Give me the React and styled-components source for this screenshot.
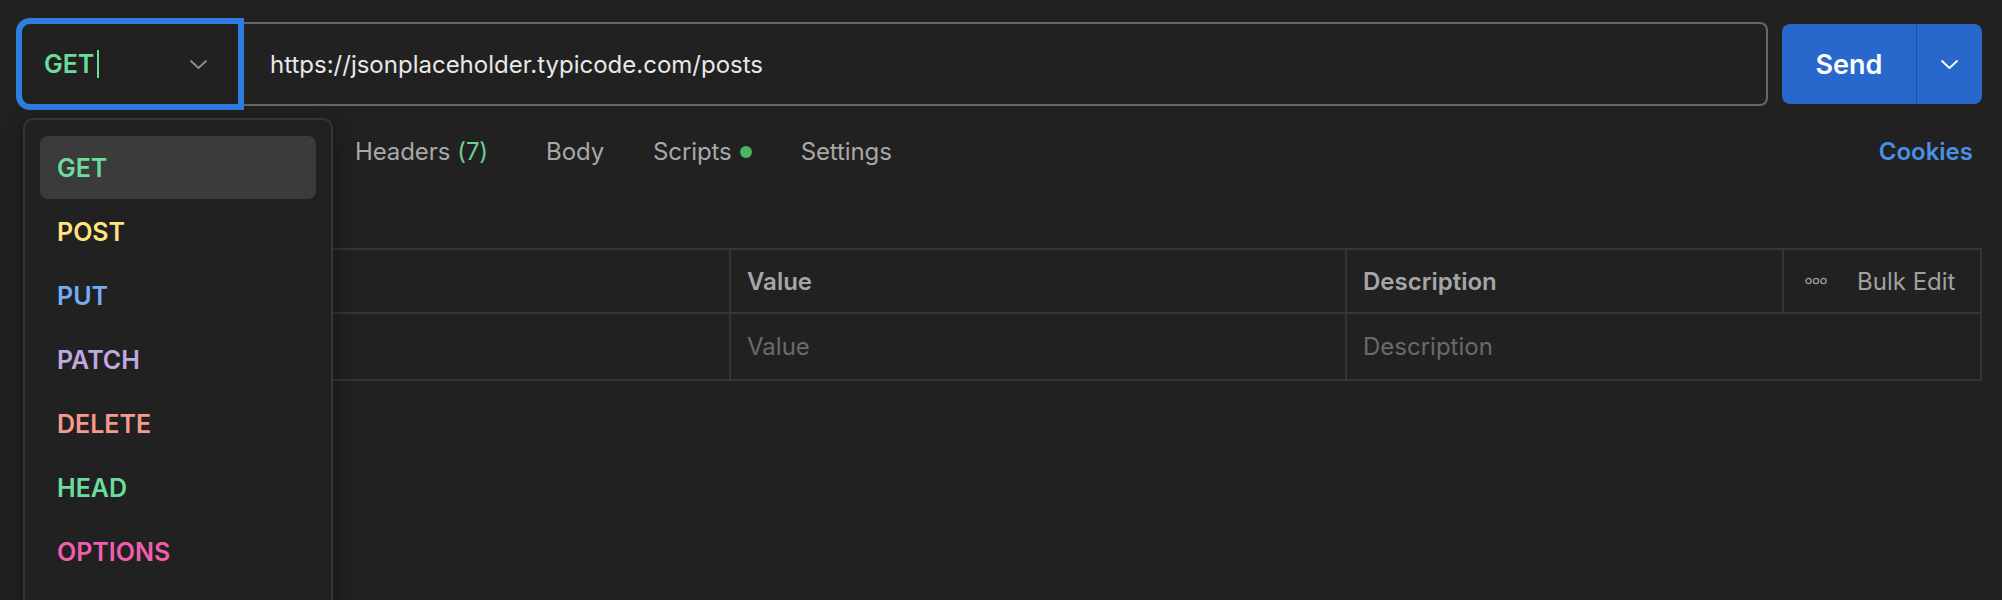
import React from "react";
import styled, { createGlobalStyle } from "styled-components";

const GlobalStyle = createGlobalStyle`
  html, body { margin: 0; padding: 0; background: #212121; }
  body { font-family: Inter, "Noto Sans", sans-serif; -webkit-font-smoothing: antialiased; }
  * { box-sizing: border-box; }
`;

const Page = styled.div`
  position: relative;
  height: 600px;
  overflow: hidden;
  padding: 18px 20px 0 23px;
  background: #212121;
`;

const TopRow = styled.div`
  display: flex;
  align-items: center;
  height: 92px;
  margin-left: -7px;
`;

const MethodSelect = styled.div`
  flex-shrink: 0;
  width: 228px;
  height: 92px;
  border: 6px solid #2f7de1;
  border-radius: 14px 0 0 14px;
  display: flex;
  align-items: center;
  justify-content: space-between;
  padding: 0 31px 0 22px;
  background: #212121;
`;

const MethodValue = styled.span`
  display: flex;
  align-items: center;
  color: #6bdd9a;
  font-size: 25px;
  font-weight: 600;
`;

const Caret = styled.span`
  width: 2px;
  height: 28px;
  margin-left: 3px;
  background: #6bdd9a;
`;

const UrlField = styled.div`
  flex: 1;
  height: 84px;
  border: 2px solid #676767;
  border-left: none;
  border-radius: 0 8px 8px 0;
  padding-left: 26px;
  display: flex;
  align-items: center;
  color: #e8e8e8;
  font-size: 24px;
`;

const SendGroup = styled.div`
  flex-shrink: 0;
  margin-left: 14px;
  width: 200px;
  height: 80px;
  border-radius: 8px;
  background: #2868cd;
  display: flex;
  overflow: hidden;
`;

const SendButton = styled.div`
  width: 135px;
  display: flex;
  align-items: center;
  justify-content: center;
  color: #ffffff;
  font-size: 27px;
  font-weight: 600;
  border-right: 1px solid #1b53a5;
`;

const SendMenu = styled.div`
  flex: 1;
  display: flex;
  align-items: center;
  justify-content: center;
`;

const TabRow = styled.div`
  display: flex;
  align-items: center;
  height: 83px;
`;

const TabList = styled.div`
  display: flex;
  align-items: center;
  gap: 49px;
  padding-left: 332px;
`;

const Tab = styled.div`
  display: flex;
  align-items: center;
  font-size: 24px;
  letter-spacing: -0.1px;
  color: #a8a8a8;
`;

const Count = styled.span`
  color: #6fcf97;
  margin-left: 7px;
  margin-right: 9px;
`;

const Dot = styled.span`
  width: 12px;
  height: 12px;
  border-radius: 50%;
  margin-left: 8px;
  background: #4cb466;
`;

const Cookies = styled.div`
  margin-left: auto;
  margin-right: 9px;
  color: #4a90e2;
  font-size: 24px;
  font-weight: 600;
`;

const Spacer = styled.div`
  height: 55px;
`;

const Table = styled.div`
  display: grid;
  grid-template-columns: 706px 616px 437px 200px;
  border-top: 2px solid #353535;
`;

const Cell = styled.div`
  height: ${(p) => p.$h}px;
  display: flex;
  align-items: center;
  padding-left: 16px;
  border-left: 2px solid #353535;
  border-bottom: 2px solid #353535;
  border-right: ${(p) => (p.$last ? "2px solid #353535" : "none")};
  grid-column: ${(p) => (p.$span ? `span ${p.$span}` : "auto")};
  font-size: 24px;
  font-weight: ${(p) => (p.$head ? 600 : 400)};
  color: ${(p) => (p.$head ? "#a6a6a6" : "#6a6a6a")};
`;

const BulkCell = styled(Cell)`
  padding-left: 21px;
  gap: 30px;
  font-weight: 400;
  color: #a0a0a0;
`;

const Dropdown = styled.div`
  position: absolute;
  left: 23px;
  top: 118px;
  width: 310px;
  height: 520px;
  z-index: 2;
  border: 2px solid #363636;
  border-radius: 10px;
  background: #212121;
  padding: 16px 15px;
  display: flex;
  flex-direction: column;
  gap: 1px;
  box-shadow: 0 6px 22px rgba(0, 0, 0, 0.35);
`;

const Item = styled.div`
  flex-shrink: 0;
  height: 63px;
  border-radius: 8px;
  padding-left: 17px;
  display: flex;
  align-items: center;
  font-size: 25px;
  font-weight: 600;
  color: ${(p) => p.$color};
  background: ${(p) => (p.$active ? "#3b3b3b" : "transparent")};
`;

const Chevron = ({ color }) => (
  <svg width="17" height="9" viewBox="0 0 17 9" fill="none">
    <path d="M1 1 L8.5 8 L16 1" stroke={color} strokeWidth="1.8" strokeLinecap="round" strokeLinejoin="round" />
  </svg>
);

const Dots = () => (
  <svg width="22" height="8" viewBox="0 0 22 8" fill="none">
    <circle cx="3.5" cy="4" r="2.6" stroke="#9a9a9a" strokeWidth="1.4" />
    <circle cx="11" cy="4" r="2.6" stroke="#9a9a9a" strokeWidth="1.4" />
    <circle cx="18.5" cy="4" r="2.6" stroke="#9a9a9a" strokeWidth="1.4" />
  </svg>
);

const methods = [
  { name: "GET", color: "#6bdd9a" },
  { name: "POST", color: "#ffe47e" },
  { name: "PUT", color: "#74aef6" },
  { name: "PATCH", color: "#c0a8e1" },
  { name: "DELETE", color: "#f79a8e" },
  { name: "HEAD", color: "#6bdd9a" },
  { name: "OPTIONS", color: "#f15eb0" },
];

export default function App() {
  return (
    <>
      <GlobalStyle />
      <Page>
        <TopRow>
          <MethodSelect>
            <MethodValue>
              GET
              <Caret />
            </MethodValue>
            <Chevron color="#8f8f8f" />
          </MethodSelect>
          <UrlField>https://jsonplaceholder.typicode.com/posts</UrlField>
          <SendGroup>
            <SendButton>Send</SendButton>
            <SendMenu>
              <Chevron color="#ffffff" />
            </SendMenu>
          </SendGroup>
        </TopRow>

        <TabRow>
          <TabList>
            <Tab>
              Headers<Count>(7)</Count>
            </Tab>
            <Tab>Body</Tab>
            <Tab>
              Scripts
              <Dot />
            </Tab>
            <Tab>Settings</Tab>
          </TabList>
          <Cookies>Cookies</Cookies>
        </TabRow>

        <Spacer />

        <Table>
          <Cell $h={64} $head />
          <Cell $h={64} $head>Value</Cell>
          <Cell $h={64} $head>Description</Cell>
          <BulkCell $h={64} $last>
            <Dots />
            Bulk Edit
          </BulkCell>
          <Cell $h={67} />
          <Cell $h={67}>Value</Cell>
          <Cell $h={67} $span={2} $last>
            Description
          </Cell>
        </Table>

        <Dropdown>
          {methods.map((m, i) => (
            <Item key={m.name} $color={m.color} $active={i === 0}>
              {m.name}
            </Item>
          ))}
        </Dropdown>
      </Page>
    </>
  );
}
